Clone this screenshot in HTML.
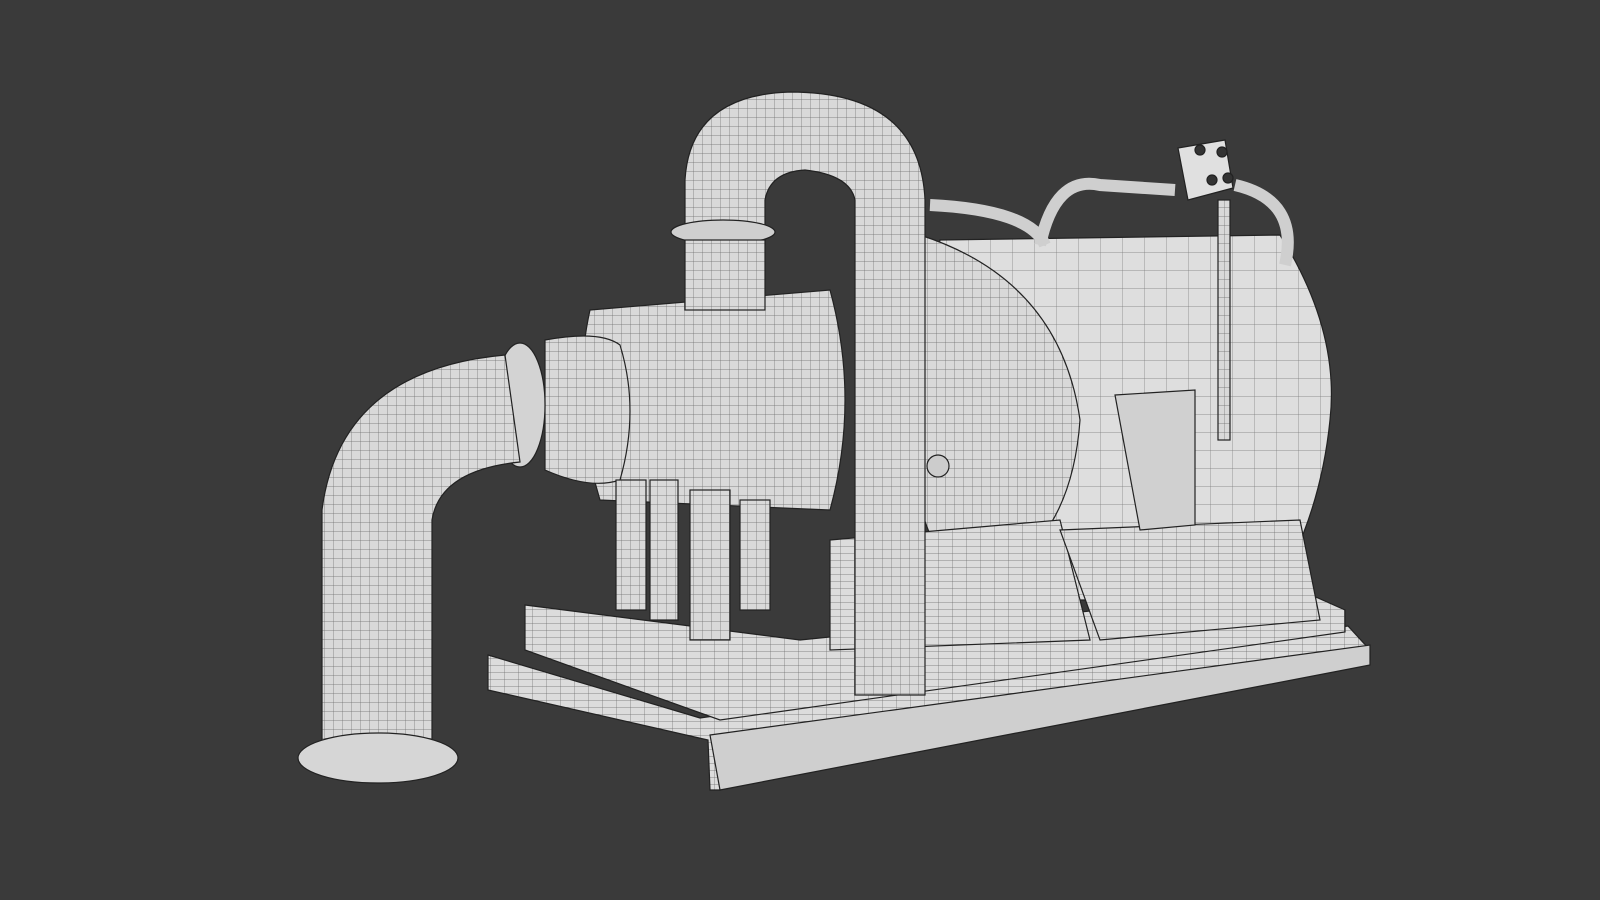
<!DOCTYPE html>
<html><head><meta charset="utf-8"><style>
html,body{margin:0;padding:0;background:#3a3a3a;width:1600px;height:900px;overflow:hidden}
svg{display:block}
</style></head><body>
<svg width="1600" height="900" viewBox="0 0 1600 900" xmlns="http://www.w3.org/2000/svg">
<defs>
<pattern id="g" width="9" height="9" patternUnits="userSpaceOnUse">
<rect width="9" height="9" fill="#d9d9d9"/>
<path d="M0 0H9M0 0V9" stroke="#6a6a6a" stroke-width="0.7"/>
</pattern>
<pattern id="g2" width="14" height="7" patternUnits="userSpaceOnUse">
<rect width="14" height="7" fill="#dcdcdc"/>
<path d="M0 0H14M0 0V7" stroke="#6a6a6a" stroke-width="0.7"/>
</pattern>
<pattern id="g3" width="22" height="18" patternUnits="userSpaceOnUse">
<rect width="22" height="18" fill="#dedede"/>
<path d="M0 0H22M0 0V18" stroke="#777" stroke-width="0.7"/>
</pattern>
</defs>
<rect width="1600" height="900" fill="#3a3a3a"/>
<g stroke="#222" stroke-width="1.2">
<!-- base plates -->
<polygon points="488,655 700,718 1348,626 1370,650 1370,660 725,765 720,790 710,790 708,740 488,690" fill="url(#g2)"/>
<polygon points="525,605 800,640 1300,590 1345,610 1345,632 720,720 525,650" fill="url(#g2)"/>
<polygon points="710,735 1370,645 1370,665 720,790" fill="#cfcfcf"/>
<!-- motor -->
<path d="M940,240 L1280,235 Q1340,330 1330,420 Q1320,520 1270,600 L960,600 Q900,420 940,240Z" fill="url(#g3)"/>
<path d="M920,235 Q1060,280 1080,420 Q1070,560 960,590 Q900,500 910,400 Q905,300 920,235Z" fill="url(#g)"/>
<polygon points="830,540 1060,520 1090,640 830,650" fill="url(#g2)"/>
<polygon points="1060,530 1300,520 1320,620 1100,640" fill="url(#g2)"/>
<polygon points="1115,395 1195,390 1195,525 1140,530" fill="#d0d0d0"/>
<!-- junction box -->
<polygon points="1178,148 1225,140 1233,188 1188,200" fill="#e0e0e0"/>
<circle cx="1200" cy="150" r="5" fill="#333"/><circle cx="1222" cy="152" r="5" fill="#333"/>
<circle cx="1212" cy="180" r="5" fill="#333"/><circle cx="1228" cy="178" r="5" fill="#333"/>
<rect x="1218" y="200" width="12" height="240" fill="url(#g)"/>
<path d="M1040,245 Q1055,175 1100,185 L1175,190" fill="none" stroke="#cfcfcf" stroke-width="12"/>
<path d="M1235,185 Q1300,200 1285,265" fill="none" stroke="#cfcfcf" stroke-width="12"/>
<path d="M930,205 Q1030,210 1045,245" fill="none" stroke="#cfcfcf" stroke-width="12"/>
<!-- pump body -->
<path d="M590,310 L830,290 Q860,400 830,510 L600,500 Q570,400 590,310Z" fill="url(#g)"/>
<path d="M545,340 Q600,330 620,345 Q640,410 620,480 Q590,490 545,470Z" fill="url(#g)"/>
<!-- pump legs -->
<rect x="616" y="480" width="30" height="130" fill="url(#g)"/>
<rect x="650" y="480" width="28" height="140" fill="url(#g)"/>
<rect x="690" y="490" width="40" height="150" fill="url(#g)"/>
<rect x="740" y="500" width="30" height="110" fill="url(#g)"/>
<!-- left flange -->
<ellipse cx="520" cy="405" rx="25" ry="62" fill="#d3d3d3"/>
<!-- elbow pipe -->
<path d="M505,355 Q340,370 322,510 L322,760 L432,760 L432,520 Q440,470 520,462 Z" fill="url(#g)"/>
<ellipse cx="378" cy="758" rx="80" ry="25" fill="#d6d6d6"/>
<!-- U pipe -->
<path d="M685,240 L685,180 Q690,95 790,92 Q920,92 925,200 L925,695 L855,695 L855,200 Q850,175 805,170 Q770,172 765,200 L765,245Z" fill="url(#g)"/>
<ellipse cx="723" cy="232" rx="52" ry="12" fill="#cfcfcf"/>
<rect x="685" y="240" width="80" height="70" fill="url(#g)"/>
<circle cx="938" cy="466" r="11" fill="#ccc"/>
</g>
</svg>
</body></html>
